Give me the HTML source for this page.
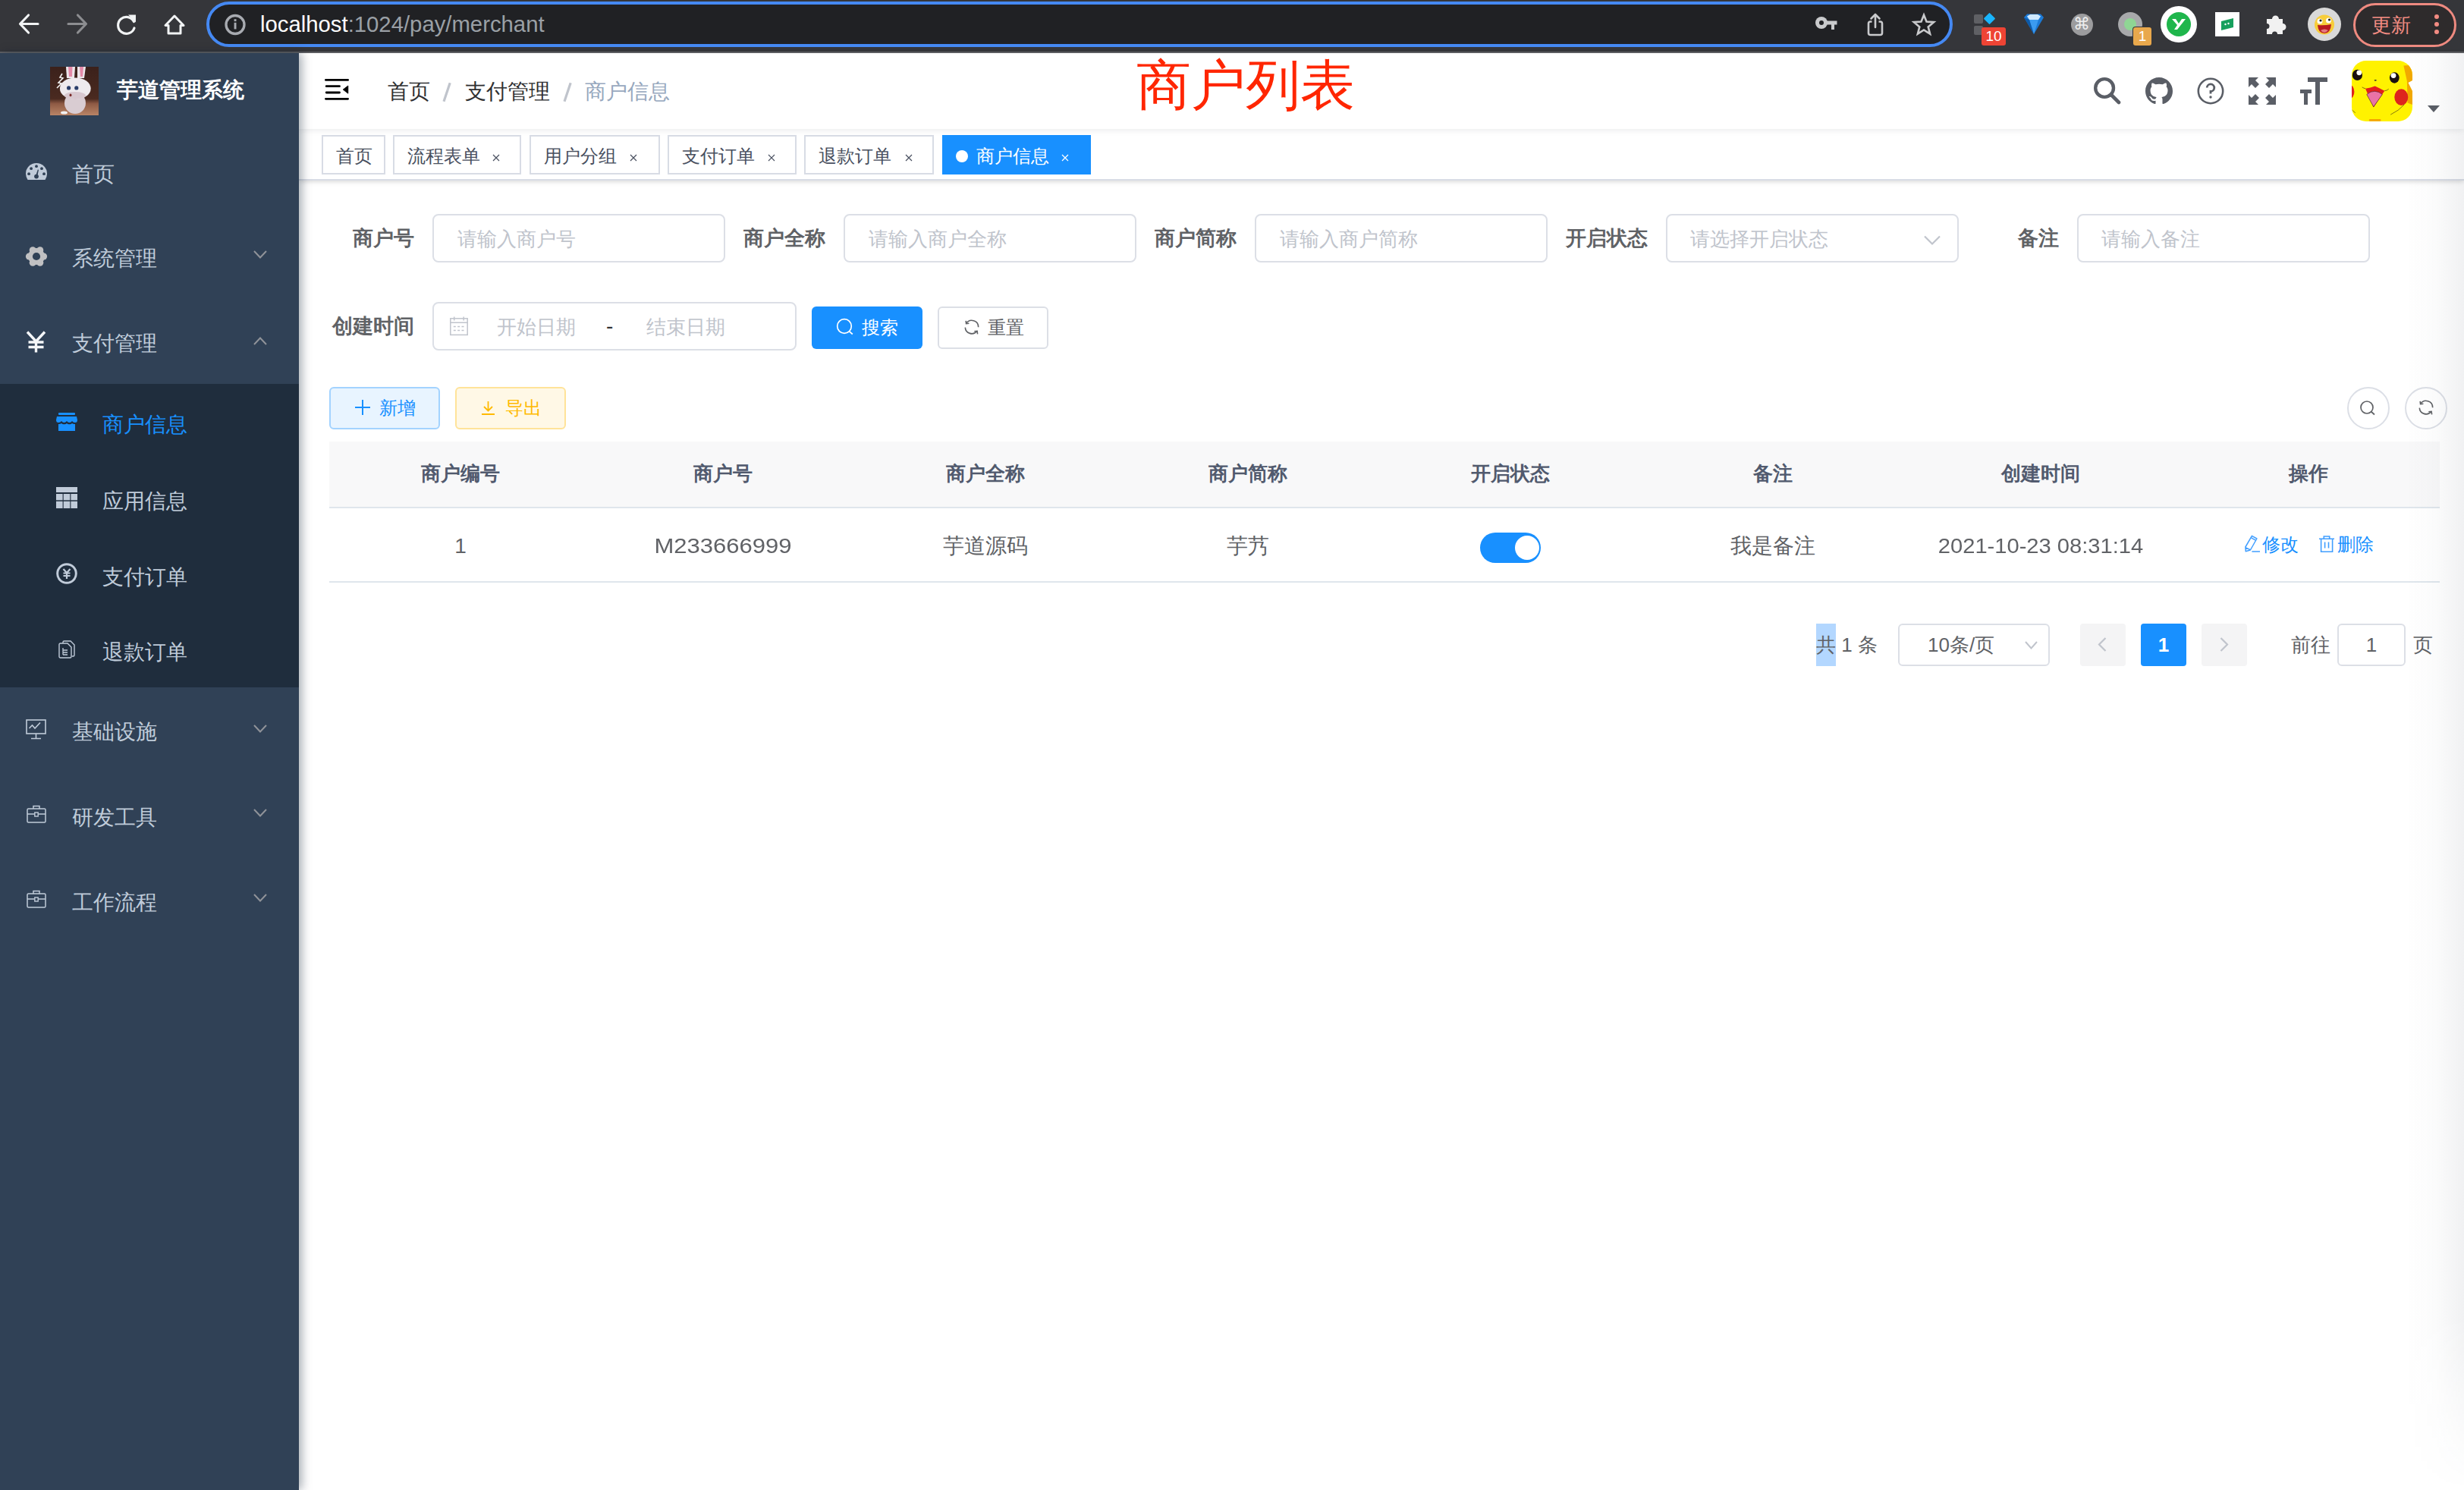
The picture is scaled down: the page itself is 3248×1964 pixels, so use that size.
<!DOCTYPE html>
<html><head><meta charset="utf-8">
<style>
*{box-sizing:border-box;margin:0;padding:0}
html,body{width:3248px;height:1964px;overflow:hidden;background:#fff;font-family:"Liberation Sans",sans-serif}
.a{position:absolute;white-space:nowrap}
svg{position:absolute;overflow:visible}
/* chrome */
#chrome{position:absolute;left:0;top:0;width:3248px;height:70px;background:#35363a}
#chrome .line{position:absolute;left:0;top:68px;width:3248px;height:2px;background:#5f6064}
#url{position:absolute;left:272px;top:2px;width:2302px;height:60px;border:4px solid #4589f3;border-radius:30px;background:#202124}
/* sidebar */
#side{position:absolute;left:0;top:70px;width:394px;height:1894px;background:#304156;box-shadow:4px 0 12px rgba(0,21,41,.35);z-index:5}
.mi{position:absolute;left:0;width:394px;color:#bfcbd9;font-size:28px;line-height:40px}
.sub{position:absolute;left:0;top:436px;width:394px;height:400px;background:#1f2d3d}
/* main */
#nav{position:absolute;left:394px;top:70px;width:2854px;height:100px;background:#fff;box-shadow:0 2px 8px rgba(0,21,41,.08);z-index:2}
#tags{position:absolute;left:394px;top:170px;width:2854px;height:68px;background:#fff;border-bottom:2px solid #d8dce5;box-shadow:0 2px 6px 0 rgba(0,0,0,.12),0 0 6px 0 rgba(0,0,0,.04);z-index:1}
.tag{position:absolute;top:8px;height:52px;border:2px solid #d8dce5;color:#495060;background:#fff;font-size:24px;line-height:48px}
.lbl{position:absolute;font-size:27px;font-weight:bold;color:#606266;line-height:40px;text-align:right}
.inp{position:absolute;height:64px;border:2px solid #dcdfe6;border-radius:8px;background:#fff}
.ph{position:absolute;font-size:26px;color:#c0c4cc;line-height:40px}
.th{position:absolute;font-size:26px;font-weight:bold;color:#515a6e;line-height:40px;text-align:center}
.td{position:absolute;font-size:28px;color:#606266;line-height:40px;text-align:center}
</style></head><body>

<!-- ============ CHROME TOOLBAR ============ -->
<div id="chrome">
  <div class="line"></div>
  <!-- back -->
  <svg style="left:24px;top:18px" width="28" height="27" viewBox="0 0 28 27"><path d="M26 13.5H3 M13.5 2L2.5 13.5L13.5 25" stroke="#f1f3f4" stroke-width="3.2" fill="none" stroke-linecap="round" stroke-linejoin="round"/></svg>
  <!-- forward -->
  <svg style="left:88px;top:18px" width="28" height="27" viewBox="0 0 28 27"><path d="M2 13.5H25 M14.5 2L25.5 13.5L14.5 25" stroke="#8c8d90" stroke-width="3.2" fill="none" stroke-linecap="round" stroke-linejoin="round"/></svg>
  <!-- reload -->
  <svg style="left:152px;top:18px" width="30" height="28" viewBox="0 0 30 28"><path d="M24.5 10.5A11 11 0 1 0 25 19" stroke="#f1f3f4" stroke-width="3.2" fill="none" stroke-linecap="round"/><path d="M17 1.5H27V11.5Z" fill="#f1f3f4"/></svg>
  <!-- home -->
  <svg style="left:216px;top:19px" width="28" height="27" viewBox="0 0 28 27"><path d="M14 2L2 14.5H6V25H22V14.5H26Z" stroke="#f1f3f4" stroke-width="3" fill="none" stroke-linejoin="round"/></svg>
  <div id="url"></div>
  <!-- info icon -->
  <svg style="left:296px;top:19px" width="28" height="28" viewBox="0 0 28 28"><circle cx="14" cy="13.5" r="12" stroke="#a8abb1" stroke-width="3.3" fill="none"/><rect x="12.6" y="6.2" width="2.9" height="2.9" fill="#a8abb1"/><rect x="12.6" y="10.8" width="2.9" height="8.6" fill="#a8abb1"/></svg>
  <div class="a" style="left:343px;top:12px;font-size:29.3px;line-height:40px;color:#fff">localhost<span style="color:#9aa0a6">:1024/pay/merchant</span></div>
  <!-- key -->
  <svg style="left:2393px;top:22px" width="30" height="18" viewBox="0 0 30 18"><circle cx="8" cy="8" r="8" fill="#c9cacc"/><circle cx="8" cy="8" r="3" fill="#202124"/><rect x="13" y="5.5" width="15.5" height="5" fill="#c9cacc"/><rect x="21" y="8" width="4" height="9" fill="#c9cacc"/></svg>
  <!-- share -->
  <svg style="left:2461px;top:17px" width="22" height="31" viewBox="0 0 22 31"><path d="M11 2V19 M5.5 7.5L11 2L16.5 7.5" stroke="#c9cacc" stroke-width="2.6" fill="none" stroke-linecap="round" stroke-linejoin="round"/><path d="M6.5 11.5H4.5A2.5 2.5 0 0 0 2 14V26.5A2.5 2.5 0 0 0 4.5 29H17.5A2.5 2.5 0 0 0 20 26.5V14A2.5 2.5 0 0 0 17.5 11.5H15.5" stroke="#c9cacc" stroke-width="2.6" fill="none"/></svg>
  <!-- star -->
  <svg style="left:2520px;top:17px" width="32" height="30" viewBox="0 0 32 30"><path d="M16.0 2.7L19.5 11.6L29.1 12.2L21.7 18.4L24.1 27.7L16.0 22.5L7.9 27.7L10.3 18.4L2.9 12.2L12.5 11.6Z" stroke="#c9cacc" stroke-width="2.6" fill="none" stroke-linejoin="miter"/></svg>

  <!-- ext 1: squares + diamond + badge -->
  <div class="a" style="left:2602px;top:19px;width:12px;height:12px;background:#5f6064;border-radius:2px"></div>
  <div class="a" style="left:2602px;top:34px;width:12px;height:12px;background:#5f6064;border-radius:2px"></div>
  <div class="a" style="left:2617px;top:19px;width:11px;height:11px;background:#19b5fe;transform:rotate(45deg);border-radius:1px"></div>
  <div class="a" style="left:2612px;top:36px;width:32px;height:24px;background:#ee4434;border-radius:3px;color:#fff;font-size:19px;line-height:24px;text-align:center">10</div>
  <!-- ext 2: gem -->
  <svg style="left:2667px;top:17px" width="28" height="30" viewBox="0 0 28 30"><path d="M1 6L5 1.5H23L27 6L14 28Z" fill="#1c7ad6"/><path d="M5 4.5L9 2H19L23 4.5L20 9H8Z" fill="#cfe9ff"/><path d="M8 9L14 28L20 9Z" fill="#3b9bf0"/><path d="M1 6L8 9L14 28Z" fill="#0d5aa8"/></svg>
  <!-- ext 3: command -->
  <div class="a" style="left:2730px;top:18px;width:29px;height:29px;border-radius:50%;background:#9c9c9e"></div>
  <div class="a" style="left:2733px;top:15px;font-size:22px;line-height:34px;color:#eee;font-family:'Liberation Sans',sans-serif">&#8984;</div>
  <!-- ext 4 -->
  <div class="a" style="left:2792px;top:16px;width:32px;height:32px;border-radius:50%;background:#a8a9ab"></div>
  <div class="a" style="left:2800px;top:24px;width:16px;height:16px;border-radius:50%;background:#8fd694"></div>
  <div class="a" style="left:2811px;top:35px;width:26px;height:26px;border-radius:4px;background:#35363a"></div>
  <div class="a" style="left:2812px;top:36px;width:24px;height:24px;background:#e9a84c;border-radius:3px;color:#fff;font-size:19px;line-height:24px;text-align:center">1</div>
  <!-- ext 5: green y -->
  <div class="a" style="left:2848px;top:8px;width:48px;height:48px;border-radius:50%;background:#fff"></div>
  <div class="a" style="left:2856px;top:16px;width:32px;height:32px;border-radius:50%;background:#1fb64c"></div>
  <svg style="left:2862px;top:24px" width="20" height="16" viewBox="0 0 20 16"><path d="M1 1H6L10 7L14 1H19L8 15H4L8 9Z" fill="#fff"/></svg>
  <!-- ext 6: green doc -->
  <div class="a" style="left:2920px;top:16px;width:32px;height:32px;background:#fff"></div>
  <svg style="left:2927px;top:23px" width="18" height="18" viewBox="0 0 18 18"><path d="M1 5L17 1V13L1 17Z" fill="#17a05d"/><circle cx="6.5" cy="9" r="1.2" fill="#fff"/><circle cx="10.5" cy="8" r="1.2" fill="#fff"/></svg>
  <!-- ext 7: puzzle -->
  <svg style="left:2986px;top:17px" width="30" height="30" viewBox="0 0 30 30"><path d="M2 8H9A4.5 4.5 0 1 1 18 8H23V14A4.5 4.5 0 1 1 23 23V28H16A3.5 3.5 0 1 0 9 28H2V21A3.5 3.5 0 1 0 2 14Z" fill="#f1f1f1"/></svg>
  <!-- ext 8: emoji -->
  <div class="a" style="left:3042px;top:10px;width:44px;height:44px;border-radius:50%;background:#d9d9d9"></div>
  <svg style="left:3050px;top:19px" width="28" height="27" viewBox="0 0 28 27"><circle cx="14" cy="13.5" r="13" fill="#f7cd3b"/><circle cx="8" cy="9" r="3.5" fill="#fff"/><circle cx="19.5" cy="8" r="3.5" fill="#fff"/><circle cx="9" cy="8" r="1.6" fill="#222"/><circle cx="20.5" cy="7" r="1.6" fill="#222"/><path d="M5 14Q14 15 23 13Q22 25 14 25Q6 25 5 14Z" fill="#b8191f"/><path d="M9 21Q14 18 19 21Q16 24 14 24Q11 24 9 21Z" fill="#e57a82"/></svg>
  <!-- update pill -->
  <div class="a" style="left:3102px;top:4px;width:136px;height:58px;border:3px solid #ee8a80;border-radius:29px;background:#2e2b2c"></div>
  <div class="a" style="left:3126px;top:13px;font-size:26px;line-height:40px;color:#f28b82">更新</div>
  <div class="a" style="left:3209px;top:19px;width:6px;height:6px;border-radius:50%;background:#f28b82"></div>
  <div class="a" style="left:3209px;top:29px;width:6px;height:6px;border-radius:50%;background:#f28b82"></div>
  <div class="a" style="left:3209px;top:39px;width:6px;height:6px;border-radius:50%;background:#f28b82"></div>
</div>

<!-- ============ SIDE BAR ============ -->
<div id="side">

  <!-- logo -->
  <svg style="left:66px;top:18px" width="64" height="64" viewBox="0 0 64 64">
    <defs><linearGradient id="lg" x1="0" y1="0" x2="0" y2="1"><stop offset="0" stop-color="#3b211b"/><stop offset="0.66" stop-color="#4a2a20"/><stop offset="0.76" stop-color="#8e5a44"/><stop offset="1" stop-color="#b98466"/></linearGradient></defs>
    <rect width="64" height="64" fill="url(#lg)"/>
        <path d="M21 0H33L32 15H22Z" fill="#ece6ea"/><path d="M24 0H29.5L29 13H25Z" fill="#e48aa8"/>
    <path d="M36 0H47L45 15H36Z" fill="#ece6ea"/><path d="M39 0H44L43 13H40Z" fill="#e48aa8"/>
    <path d="M16 9L13 14L17 15L11 21L15 22L9 28" stroke="#f2f2f2" stroke-width="1.6" fill="none"/>
    <ellipse cx="33" cy="48" rx="14" ry="14" fill="#d9ccd2"/>
    <ellipse cx="33.3" cy="28.7" rx="20.4" ry="14.3" fill="#eeeaee"/>
    <ellipse cx="33" cy="38" rx="14" ry="5" fill="#d8c8d0"/>
    <circle cx="24.6" cy="27.9" r="2.6" fill="#2a3e6a"/><circle cx="34.8" cy="27.9" r="2.6" fill="#2a3e6a"/>
    <ellipse cx="27" cy="37.4" rx="1.5" ry="1.8" fill="#7a2a2a"/>
    <ellipse cx="18.5" cy="60.5" rx="4.5" ry="2" fill="#f0f0f2"/>
  </svg>
  <div class="a" style="left:154px;top:29px;font-size:28px;line-height:40px;color:#fff;font-weight:bold">芋道管理系统</div>

  <!-- 首页 -->
  <svg style="left:34px;top:145px" width="28" height="22" viewBox="0 0 28 22"><path d="M2.5 22Q0 18 0 14A14 14 0 0 1 28 14Q28 18 25.5 22Z" fill="#c0cbd9"/><circle cx="14" cy="4.2" r="1.9" fill="#304156"/><circle cx="7.1" cy="7.2" r="1.9" fill="#304156"/><circle cx="21" cy="7.2" r="1.9" fill="#304156"/><circle cx="4.1" cy="14.2" r="1.9" fill="#304156"/><circle cx="24" cy="14.2" r="1.9" fill="#304156"/><circle cx="14" cy="17.6" r="2.9" fill="#304156"/><path d="M13 17L15.8 8.5L17 8.8L15.2 17.5Z" fill="#304156"/></svg>
  <div class="mi" style="top:140px;left:95px">首页</div>

  <!-- 系统管理 -->
  <svg style="left:34px;top:254px" width="28" height="28" viewBox="0 0 28 28"><circle cx="14" cy="14" r="11" fill="#c0c0c2"/><circle cx="23.60" cy="14.00" r="4.5" fill="#c0c0c2"/><circle cx="18.80" cy="22.31" r="4.5" fill="#c0c0c2"/><circle cx="9.20" cy="22.31" r="4.5" fill="#c0c0c2"/><circle cx="4.40" cy="14.00" r="4.5" fill="#c0c0c2"/><circle cx="9.20" cy="5.69" r="4.5" fill="#c0c0c2"/><circle cx="18.80" cy="5.69" r="4.5" fill="#c0c0c2"/><circle cx="14" cy="14" r="5.1" fill="#304156"/></svg>
  <div class="mi" style="top:251px;left:95px">系统管理</div>
  <svg style="left:334px;top:260px" width="18" height="11" viewBox="0 0 18 11"><path d="M1 1L9 9.5L17 1" stroke="#909399" stroke-width="2" fill="none"/></svg>

  <!-- 支付管理 -->
  <svg style="left:34px;top:366px" width="27" height="29" viewBox="0 0 27 29"><path d="M2 1.5L13.5 14L25 1.5 M13.5 14V28.5 M3.5 15H23.5 M3.5 21.5H23.5" stroke="#f4f6f8" stroke-width="3.4" fill="none"/></svg>
  <div class="mi" style="top:363px;left:95px">支付管理</div>
  <svg style="left:334px;top:374px" width="18" height="11" viewBox="0 0 18 11"><path d="M1 10L9 1.5L17 10" stroke="#909399" stroke-width="2" fill="none"/></svg>

  <div class="sub">
    <!-- 商户信息 (active) -->
    <svg style="left:74px;top:38px" width="28" height="25" viewBox="0 0 28 25"><rect x="3" y="0" width="22" height="3" rx="1" fill="#1890ff"/><path d="M1 5H27L28 9.5Q28 13 25 13Q22.3 13 21 11Q19.5 13 17.5 13Q15.5 13 14 11Q12.5 13 10.5 13Q8.5 13 7 11Q5.7 13 3 13Q0 13 0 9.5Z" fill="#1890ff"/><path d="M3 15Q5.3 15.3 7 14Q8.6 15.5 10.5 15.2Q12.5 15.5 14 14Q15.5 15.5 17.5 15.2Q19.4 15.5 21 14Q22.7 15.3 25 15V24H3Z" fill="#1890ff"/></svg>
    <div class="mi" style="top:34px;left:135px;color:#1890ff">商户信息</div>
    <!-- 应用信息 -->
    <svg style="left:74px;top:136px" width="28" height="28" viewBox="0 0 28 28"><rect x="0" y="0" width="28" height="7" fill="#c0cbd9"/><rect x="0" y="9" width="8.6" height="8.3" fill="#c0cbd9"/><rect x="9.7" y="9" width="8.6" height="8.3" fill="#c0cbd9"/><rect x="19.4" y="9" width="8.6" height="8.3" fill="#c0cbd9"/><rect x="0" y="18.8" width="8.6" height="9.2" fill="#c0cbd9"/><rect x="9.7" y="18.8" width="8.6" height="9.2" fill="#c0cbd9"/><rect x="19.4" y="18.8" width="8.6" height="9.2" fill="#c0cbd9"/></svg>
    <div class="mi" style="top:135px;left:135px">应用信息</div>
    <!-- 支付订单 -->
    <svg style="left:74px;top:236px" width="28" height="28" viewBox="0 0 28 28"><circle cx="14" cy="14" r="12.3" stroke="#c0cbd9" stroke-width="3" fill="none"/><path d="M9.5 8L14 13L18.5 8 M14 13V21 M9.5 13.5H18.5 M9.5 17H18.5" stroke="#c0cbd9" stroke-width="2.2" fill="none"/></svg>
    <div class="mi" style="top:235px;left:135px">支付订单</div>
    <!-- 退款订单 -->
    <svg style="left:77px;top:338px" width="22" height="24" viewBox="0 0 22 24"><path d="M6 4V2.5A1.5 1.5 0 0 1 7.5 1H16L21 6V19.5A1.5 1.5 0 0 1 19.5 21H18" stroke="#c0cbd9" stroke-width="1.4" fill="none"/><path d="M2.5 4H12L17 9V21.5A1.5 1.5 0 0 1 15.5 23H2.5A1.5 1.5 0 0 1 1 21.5V5.5A1.5 1.5 0 0 1 2.5 4Z" stroke="#c0cbd9" stroke-width="1.4" fill="none"/><path d="M6 13H12 M6 16H12 M6 19H12 M6 10V19" stroke="#c0cbd9" stroke-width="1.3" fill="none"/></svg>
    <div class="mi" style="top:334px;left:135px">退款订单</div>
  </div>

  <!-- 基础设施 -->
  <svg style="left:34px;top:878px" width="27" height="27" viewBox="0 0 27 27"><rect x="1" y="1" width="25" height="18" stroke="#c0cbd9" stroke-width="1.6" fill="none"/><path d="M4.5 12L8.5 8L12 12L19 4.5 M13.5 19V25.5 M7 25.5H20" stroke="#c0cbd9" stroke-width="1.6" fill="none"/></svg>
  <div class="mi" style="top:875px;left:95px">基础设施</div>
  <svg style="left:334px;top:885px" width="18" height="11" viewBox="0 0 18 11"><path d="M1 1L9 9.5L17 1" stroke="#909399" stroke-width="2" fill="none"/></svg>

  <!-- 研发工具 -->
  <svg style="left:35px;top:991px" width="26" height="24" viewBox="0 0 26 24"><rect x="1" y="5" width="24" height="18" rx="1.5" stroke="#c0cbd9" stroke-width="1.5" fill="none"/><path d="M9 5V1.5H17V5 M1 12H10.5 M15.5 12H25" stroke="#c0cbd9" stroke-width="1.5" fill="none"/><rect x="10.8" y="10" width="4.4" height="5" stroke="#c0cbd9" stroke-width="1.4" fill="none"/></svg>
  <div class="mi" style="top:988px;left:95px">研发工具</div>
  <svg style="left:334px;top:996px" width="18" height="11" viewBox="0 0 18 11"><path d="M1 1L9 9.5L17 1" stroke="#909399" stroke-width="2" fill="none"/></svg>

  <!-- 工作流程 -->
  <svg style="left:35px;top:1103px" width="26" height="24" viewBox="0 0 26 24"><rect x="1" y="5" width="24" height="18" rx="1.5" stroke="#c0cbd9" stroke-width="1.5" fill="none"/><path d="M9 5V1.5H17V5 M1 12H10.5 M15.5 12H25" stroke="#c0cbd9" stroke-width="1.5" fill="none"/><rect x="10.8" y="10" width="4.4" height="5" stroke="#c0cbd9" stroke-width="1.4" fill="none"/></svg>
  <div class="mi" style="top:1100px;left:95px">工作流程</div>
  <svg style="left:334px;top:1108px" width="18" height="11" viewBox="0 0 18 11"><path d="M1 1L9 9.5L17 1" stroke="#909399" stroke-width="2" fill="none"/></svg>

</div>

<!-- ============ NAVBAR ============ -->
<div id="nav">
  <!-- hamburger -->
  <svg style="left:34px;top:34px" width="32" height="28" viewBox="0 0 32 28"><path d="M1.4 1.4H30.6 M2.2 9.7H19.5 M2.2 18H19.5 M1.4 26.3H30.6" stroke="#000" stroke-width="2.8" stroke-linecap="round"/><path d="M24.2 14.1L30.8 9V19.2Z" fill="#000" stroke="#000" stroke-width="0.8" stroke-linejoin="round"/></svg>
  <div class="a" style="left:117px;top:31px;font-size:28px;line-height:40px;color:#303133">首页</div>
  <svg style="left:189px;top:38px" width="12" height="27" viewBox="0 0 12 27"><path d="M10.2 1.2L2 25.8" stroke="#c0c4cc" stroke-width="3.2"/></svg>
  <div class="a" style="left:219px;top:31px;font-size:28px;line-height:40px;color:#303133">支付管理</div>
  <svg style="left:348px;top:38px" width="12" height="27" viewBox="0 0 12 27"><path d="M10.2 1.2L2 25.8" stroke="#c0c4cc" stroke-width="3.2"/></svg>
  <div class="a" style="left:377px;top:31px;font-size:28px;line-height:40px;color:#97a8be">商户信息</div>
  <!-- right icons -->
  <svg style="left:2366px;top:32px" width="36" height="36" viewBox="0 0 36 36"><circle cx="14.1" cy="14" r="11.9" stroke="#5a5e66" stroke-width="4.4" fill="none"/><path d="M23.5 23.5L33 33" stroke="#5a5e66" stroke-width="4.6" stroke-linecap="round"/></svg>
  <svg style="left:2434px;top:32px" width="36" height="36" viewBox="0 0 16 16"><path fill="#5a5e66" d="M8 0C3.58 0 0 3.58 0 8c0 3.54 2.29 6.53 5.47 7.59.4.07.55-.17.55-.38 0-.19-.01-.82-.01-1.49-2.01.37-2.53-.49-2.69-.94-.09-.23-.48-.94-.82-1.13-.28-.15-.68-.52-.01-.53.63-.01 1.08.58 1.23.82.72 1.21 1.87.87 2.33.66.07-.52.28-.87.51-1.07-1.78-.2-3.64-.89-3.64-3.95 0-.87.31-1.59.82-2.15-.08-.2-.36-1.02.08-2.12 0 0 .67-.21 2.2.82.64-.18 1.32-.27 2-.27.68 0 1.36.09 2 .27 1.53-1.04 2.2-.82 2.2-.82.44 1.1.16 1.92.08 2.12.51.56.82 1.27.82 2.15 0 3.07-1.87 3.75-3.65 3.95.29.25.54.73.54 1.48 0 1.07-.01 1.93-.01 2.2 0 .21.15.46.55.38A8.013 8.013 0 0016 8c0-4.42-3.58-8-8-8z"/></svg>
  <svg style="left:2502px;top:32px" width="36" height="36" viewBox="0 0 36 36"><circle cx="18" cy="18" r="16.2" stroke="#5a5e66" stroke-width="2.6" fill="none"/><path d="M13.2 13.5A4.8 4.8 0 1 1 18 18.5V21.5" stroke="#5a5e66" stroke-width="2.8" fill="none"/><circle cx="18" cy="26" r="1.7" fill="#5a5e66"/></svg>
  <svg style="left:2570px;top:32px" width="36" height="36" viewBox="0 0 36 36"><path fill="#5a5e66" d="M0 0H13L9 4L14 9L9 14L4 9L0 13Z M36 0V13L32 9L27 14L22 9L27 4L23 0Z M0 36V23L4 27L9 22L14 27L9 32L13 36Z M36 36H23L27 32L22 27L27 22L32 27L36 23Z"/></svg>
  <svg style="left:2638px;top:32px" width="36" height="36" viewBox="0 0 36 36"><path fill="#5a5e66" d="M10 0H36V6H26V36H20V6H10Z M0 16H15V21H10V36H5V21H0Z"/></svg>
  <!-- avatar -->
  <div class="a" style="left:2706px;top:10px;width:80px;height:80px;border-radius:19px;overflow:hidden;background:#fff200">
    <svg style="left:0;top:0" width="80" height="80" viewBox="0 0 80 80">
      <path d="M68.4 6.5L75.3 5.9L80 11.9V58L73.5 55.4L72.9 27Z" fill="#f2a900"/>
      <path d="M74.5 29L80 26V40Z" fill="#fff"/>
      <ellipse cx="7.4" cy="18.9" rx="6.6" ry="7.2" fill="#1a1010"/><circle cx="9.8" cy="15.8" r="3.4" fill="#fff"/>
      <ellipse cx="56.3" cy="22.5" rx="6.4" ry="7.2" fill="#1a1010"/><circle cx="55" cy="19.6" r="3.4" fill="#fff"/>
      <ellipse cx="31.2" cy="25.8" rx="1.6" ry="0.9" fill="#333"/>
      <path d="M13.7 34.9Q16 36.5 18 36.7 M43.3 39.7Q46.5 39.5 48.7 37.3" stroke="#4a3a10" stroke-width="0.7" fill="none"/>
      <path d="M18 36.7Q25 36 30.6 33.6Q37 36.5 43.3 39.7L28.8 61.4Z" fill="#e3201b"/>
      <path d="M19.8 44.5Q25 40 30.6 40.3Q36 40.6 40.3 44.5L28.8 60.8Z" fill="#ea73a6" stroke="#3a1a1a" stroke-width="0.6"/>
      <ellipse cx="65.3" cy="48.1" rx="9" ry="10.8" fill="#de241d"/>
      <ellipse cx="-2.6" cy="40.9" rx="6" ry="9" fill="#de241d"/>
      <path d="M51.2 71.1Q62 66 69.3 57.8 M0.4 65L4.7 68.7" stroke="#6a5a10" stroke-width="0.8" fill="none"/>
      <rect x="22.8" y="77.1" width="15.7" height="2.6" rx="1.2" fill="#f5a300"/>
    </svg>
  </div>
  <svg style="left:2806px;top:69px" width="16" height="9" viewBox="0 0 16 9"><path d="M0 0H16L8 9Z" fill="#5a5e66"/></svg>
</div>
<div id="tags">
  <div class="tag" style="left:30px;width:84px"><span class="a" style="left:17px;top:2px">首页</span></div>
  <div class="tag" style="left:124px;width:169px"><span class="a" style="left:17px;top:2px">流程表单</span><svg style="left:129px;top:23px" width="10" height="10" viewBox="0 0 10 10"><path d="M1 1L9 9M9 1L1 9" stroke="#495060" stroke-width="1.2"/></svg></div>
  <div class="tag" style="left:304px;width:172px"><span class="a" style="left:17px;top:2px">用户分组</span><svg style="left:130px;top:23px" width="10" height="10" viewBox="0 0 10 10"><path d="M1 1L9 9M9 1L1 9" stroke="#495060" stroke-width="1.2"/></svg></div>
  <div class="tag" style="left:486px;width:170px"><span class="a" style="left:17px;top:2px">支付订单</span><svg style="left:130px;top:23px" width="10" height="10" viewBox="0 0 10 10"><path d="M1 1L9 9M9 1L1 9" stroke="#495060" stroke-width="1.2"/></svg></div>
  <div class="tag" style="left:666px;width:171px"><span class="a" style="left:17px;top:2px">退款订单</span><svg style="left:131px;top:23px" width="10" height="10" viewBox="0 0 10 10"><path d="M1 1L9 9M9 1L1 9" stroke="#495060" stroke-width="1.2"/></svg></div>
  <div class="tag" style="left:848px;width:196px;background:#1890ff;border-color:#1890ff;color:#fff"><span class="a" style="left:16px;top:18px;width:16px;height:16px;border-radius:50%;background:#fff"></span><span class="a" style="left:43px;top:2px">商户信息</span><svg style="left:155px;top:23px" width="10" height="10" viewBox="0 0 10 10"><path d="M1 1L9 9M9 1L1 9" stroke="#fff" stroke-width="1.2"/></svg></div>
</div>

<!-- ============ MAIN ============ -->
<div id="content">
<!-- red annotation -->
<div class="a" style="left:1498px;top:62px;font-size:71.5px;line-height:100px;color:#ff2600;z-index:10">商户列表</div>

<!-- form row 1 -->
<div class="lbl" style="left:434px;top:294px;width:112px">商户号</div>
<div class="inp" style="left:570px;top:282px;width:386px"></div>
<div class="ph" style="left:603px;top:295px">请输入商户号</div>

<div class="lbl" style="left:976px;top:294px;width:112px">商户全称</div>
<div class="inp" style="left:1112px;top:282px;width:386px"></div>
<div class="ph" style="left:1145px;top:295px">请输入商户全称</div>

<div class="lbl" style="left:1518px;top:294px;width:112px">商户简称</div>
<div class="inp" style="left:1654px;top:282px;width:386px"></div>
<div class="ph" style="left:1687px;top:295px">请输入商户简称</div>

<div class="lbl" style="left:2060px;top:294px;width:112px">开启状态</div>
<div class="inp" style="left:2196px;top:282px;width:386px"></div>
<div class="ph" style="left:2228px;top:295px">请选择开启状态</div>
<svg style="left:2536px;top:310px" width="22" height="13" viewBox="0 0 22 13"><path d="M1 1.5L11 11.5L21 1.5" stroke="#c0c4cc" stroke-width="2.2" fill="none"/></svg>

<div class="lbl" style="left:2602px;top:294px;width:112px">备注</div>
<div class="inp" style="left:2738px;top:282px;width:386px"></div>
<div class="ph" style="left:2770px;top:295px">请输入备注</div>

<!-- form row 2 -->
<div class="lbl" style="left:400px;top:410px;width:146px">创建时间</div>
<div class="inp" style="left:570px;top:398px;width:480px"></div>
<svg style="left:593px;top:417px" width="25" height="25" viewBox="0 0 25 25"><rect x="0.8" y="2.8" width="22.4" height="21.6" stroke="#c0c4cc" stroke-width="1.5" fill="none"/><path d="M0.8 8.3H23.2 M5.7 0.5V5.5 M18.2 0.5V5.5 M4.8 13.4H7.8 M10.2 13.4H13.2 M15.5 13.4H18.5 M4.8 18.5H7.8 M10.2 18.5H13.2 M15.5 18.5H18.5" stroke="#c0c4cc" stroke-width="1.5" fill="none"/></svg>
<div class="ph" style="left:655px;top:411px">开始日期</div>
<div class="a" style="left:799px;top:410px;font-size:28px;line-height:40px;color:#303133">-</div>
<div class="ph" style="left:852px;top:411px">结束日期</div>

<div class="a" style="left:1070px;top:404px;width:146px;height:56px;background:#1890ff;border-radius:6px"></div>
<svg style="left:1103px;top:420px" width="22" height="22" viewBox="0 0 22 22"><circle cx="10" cy="10" r="9.3" stroke="#fff" stroke-width="1.7" fill="none"/><path d="M16.6 16.9L20.8 20.5" stroke="#fff" stroke-width="1.8"/></svg>
<div class="a" style="left:1136px;top:412px;font-size:24px;line-height:40px;color:#fff">搜索</div>

<div class="a" style="left:1236px;top:404px;width:146px;height:56px;background:#fff;border:2px solid #dcdfe6;border-radius:6px"></div>
<svg style="left:1271px;top:421px" width="20" height="20" viewBox="0 0 20 20"><path d="M2.6 5.5A8.7 8.7 0 0 1 18.7 10.2 M1.3 10.6A8.7 8.7 0 0 0 16.8 15.5" stroke="#606266" stroke-width="1.6" fill="none"/><path d="M2.2 1.8L2.6 5.7L6.4 5.3 M17.6 19.3L17.1 15.4L13.3 15.8" stroke="#606266" stroke-width="1.6" fill="none"/></svg>
<div class="a" style="left:1302px;top:412px;font-size:24px;line-height:40px;color:#606266">重置</div>

<!-- toolbar -->
<div class="a" style="left:434px;top:510px;width:146px;height:56px;background:#e8f4ff;border:2px solid #a3d3ff;border-radius:6px"></div>
<svg style="left:468px;top:527px" width="20" height="20" viewBox="0 0 20 20"><path d="M10 0V20 M0 10H20" stroke="#1890ff" stroke-width="2"/></svg>
<div class="a" style="left:500px;top:518px;font-size:24px;line-height:40px;color:#1890ff">新增</div>

<div class="a" style="left:600px;top:510px;width:146px;height:56px;background:#fff8e6;border:2px solid #ffe399;border-radius:6px"></div>
<svg style="left:634px;top:528px" width="19" height="19" viewBox="0 0 19 19"><path d="M9.5 1V13 M4 8L9.5 13.5L15 8 M1 18H18" stroke="#ffba00" stroke-width="1.8" fill="none"/></svg>
<div class="a" style="left:666px;top:518px;font-size:24px;line-height:40px;color:#ffba00">导出</div>

<div class="a" style="left:3094px;top:510px;width:56px;height:56px;border:2px solid #dcdfe6;border-radius:50%;background:#fff"></div>
<svg style="left:3111px;top:528px" width="21" height="19" viewBox="0 0 21 19"><circle cx="9" cy="9" r="8" stroke="#606266" stroke-width="1.7" fill="none"/><path d="M14.5 14.5L19 18.5" stroke="#606266" stroke-width="1.7"/></svg>
<div class="a" style="left:3170px;top:510px;width:56px;height:56px;border:2px solid #dcdfe6;border-radius:50%;background:#fff"></div>
<svg style="left:3188px;top:527px" width="20" height="20" viewBox="0 0 20 20"><path d="M2.6 5.5A8.7 8.7 0 0 1 18.7 10.2 M1.3 10.6A8.7 8.7 0 0 0 16.8 15.5" stroke="#606266" stroke-width="1.6" fill="none"/><path d="M2.2 1.8L2.6 5.7L6.4 5.3 M17.6 19.3L17.1 15.4L13.3 15.8" stroke="#606266" stroke-width="1.6" fill="none"/></svg>

<!-- table -->
<div class="a" style="left:434px;top:582px;width:2782px;height:88px;background:#f8f8f9;border-bottom:2px solid #dfe6ec"></div>
<div class="a" style="left:434px;top:766px;width:2782px;height:2px;background:#dfe6ec"></div>
<div class="th" style="left:434px;top:604px;width:346px">商户编号</div>
<div class="th" style="left:780px;top:604px;width:346px">商户号</div>
<div class="th" style="left:1126px;top:604px;width:346px">商户全称</div>
<div class="th" style="left:1472px;top:604px;width:346px">商户简称</div>
<div class="th" style="left:1818px;top:604px;width:346px">开启状态</div>
<div class="th" style="left:2164px;top:604px;width:346px">备注</div>
<div class="th" style="left:2510px;top:604px;width:360px">创建时间</div>
<div class="th" style="left:2870px;top:604px;width:346px">操作</div>

<div class="td" style="left:434px;top:700px;width:346px">1</div>
<div class="td" style="left:780px;top:700px;width:346px;transform:scaleX(1.108)">M233666999</div>
<div class="td" style="left:1126px;top:700px;width:346px">芋道源码</div>
<div class="td" style="left:1472px;top:700px;width:346px">芋艿</div>
<div class="a" style="left:1951px;top:702px;width:80px;height:40px;border-radius:20px;background:#1890ff"></div>
<div class="a" style="left:1997px;top:706px;width:32px;height:32px;border-radius:50%;background:#fff"></div>
<div class="td" style="left:2164px;top:700px;width:346px">我是备注</div>
<div class="td" style="left:2510px;top:700px;width:360px;transform:scaleX(1.04)">2021-10-23 08:31:14</div>
<svg style="left:2958px;top:705px" width="24" height="25" viewBox="0 0 24 25"><path d="M1.9 16L10.4 1.4L16.9 5L8.4 20L2.3 21.7Z M9.2 3.6L15.6 7.3 M2.4 17L8.2 19.6 M10.4 22H21" stroke="#409eff" stroke-width="1.5" fill="none" stroke-linejoin="round"/></svg>
<div class="a" style="left:2982px;top:698px;font-size:24px;line-height:40px;color:#1890ff">修改</div>
<svg style="left:3057px;top:706px" width="21" height="23" viewBox="0 0 21 23"><path d="M0 4.3H20 M6.3 4.3V1H13.7V4.3 M2.6 4.3V21.3H17.6V4.3 M7.6 8.5V16.6 M12.5 8.5V16.6" stroke="#409eff" stroke-width="1.6" fill="none"/></svg>
<div class="a" style="left:3081px;top:698px;font-size:24px;line-height:40px;color:#1890ff">删除</div>

<!-- pagination -->
<div class="a" style="left:2394px;top:822px;width:26px;height:56px;background:#b3d7ff"></div>
<div class="a" style="left:2394px;top:830px;font-size:26px;line-height:40px;color:#606266">共 1 条</div>
<div class="inp" style="left:2502px;top:822px;width:200px;height:56px;border-radius:6px"></div>
<div class="a" style="left:2541px;top:830px;font-size:26px;line-height:40px;color:#606266">10条/页</div>
<svg style="left:2669px;top:845px" width="17" height="11" viewBox="0 0 17 11"><path d="M1 1L8.5 9.5L16 1" stroke="#c0c4cc" stroke-width="2" fill="none"/></svg>
<div class="a" style="left:2742px;top:822px;width:60px;height:56px;background:#f4f4f5;border-radius:4px"></div>
<svg style="left:2765px;top:840px" width="12" height="19" viewBox="0 0 12 19"><path d="M10.5 1L2 9.5L10.5 18" stroke="#c0c4cc" stroke-width="2.2" fill="none"/></svg>
<div class="a" style="left:2822px;top:822px;width:60px;height:56px;background:#1890ff;border-radius:4px;color:#fff;font-size:26px;font-weight:bold;line-height:56px;text-align:center">1</div>
<div class="a" style="left:2902px;top:822px;width:60px;height:56px;background:#f4f4f5;border-radius:4px"></div>
<svg style="left:2926px;top:840px" width="12" height="19" viewBox="0 0 12 19"><path d="M1.5 1L10 9.5L1.5 18" stroke="#c0c4cc" stroke-width="2.2" fill="none"/></svg>
<div class="a" style="left:3020px;top:830px;font-size:26px;line-height:40px;color:#606266">前往</div>
<div class="inp" style="left:3081px;top:822px;width:90px;height:56px;border-radius:6px"></div>
<div class="a" style="left:3081px;top:830px;width:90px;font-size:26px;line-height:40px;color:#606266;text-align:center">1</div>
<div class="a" style="left:3181px;top:830px;font-size:26px;line-height:40px;color:#606266">页</div>

<!-- right edge shading -->
<div class="a" style="left:3172px;top:70px;width:76px;height:1894px;background:linear-gradient(to right,rgba(40,50,70,0) 0,rgba(40,50,70,.02) 50%,rgba(40,50,70,.065) 100%);-webkit-mask-image:linear-gradient(to bottom,#000 0,#000 88%,transparent 100%);pointer-events:none;z-index:20"></div>
</div>

</body></html>
